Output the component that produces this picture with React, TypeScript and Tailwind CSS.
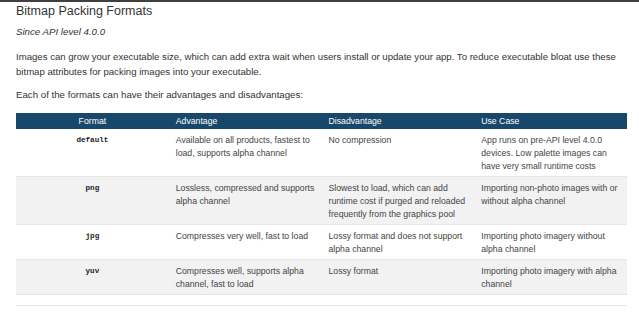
const rows = [
  {
    format: "default",
    advantage: "Available on all products, fastest to load, supports alpha channel",
    disadvantage: "No compression",
    useCase:
      "App runs on pre-API level 4.0.0 devices. Low palette images can have very small runtime costs",
  },
  {
    format: "png",
    advantage: "Lossless, compressed and supports alpha channel",
    disadvantage:
      "Slowest to load, which can add runtime cost if purged and reloaded frequently from the graphics pool",
    useCase: "Importing non-photo images with or without alpha channel",
  },
  {
    format: "jpg",
    advantage: "Compresses very well, fast to load",
    disadvantage: "Lossy format and does not support alpha channel",
    useCase: "Importing photo imagery without alpha channel",
  },
  {
    format: "yuv",
    advantage: "Compresses well, supports alpha channel, fast to load",
    disadvantage: "Lossy format",
    useCase: "Importing photo imagery with alpha channel",
  },
];

export default function App() {
  return (
    <div className="h-[318px] w-[639px] overflow-hidden border-t-2 border-[#3f3f3f] bg-white font-['Liberation_Sans',Arial,sans-serif] text-[#333]">
      <div className="px-4">
        <h2 className="pt-[1px] text-[12.5px] leading-[16px]">Bitmap Packing Formats</h2>
        <p className="mt-[5px] text-[9.7px] italic leading-[15px]">Since API level 4.0.0</p>
        <p className="mt-[10px] w-[614px] text-[9.6px] leading-[15px]">
          Images can grow your executable size, which can add extra wait when users install or
          update your app. To reduce executable bloat use these bitmap attributes for packing
          images into your executable.
        </p>
        <p className="mt-[8px] text-[9.7px] leading-[15px]">
          Each of the formats can have their advantages and disadvantages:
        </p>

        <table className="mt-[11px] w-[611px] table-fixed border-collapse text-[8.7px] leading-[13px] text-[#444]">
          <thead>
            <tr className="bg-[#17476a] text-white">
              <th className="w-1/4 px-[7px] py-[1.5px] text-center font-normal">Format</th>
              <th className="w-1/4 px-[7px] py-[1.5px] text-left font-normal">Advantage</th>
              <th className="w-1/4 px-[7px] py-[1.5px] text-left font-normal">Disadvantage</th>
              <th className="w-1/4 px-[7px] py-[1.5px] text-left font-normal">Use Case</th>
            </tr>
          </thead>
          <tbody>
            {rows.map((row, i) => (
              <tr
                key={row.format}
                className={`border-b border-[#e6e6e6] align-top ${i % 2 === 1 ? "bg-[#f2f2f2]" : "bg-white"}`}
              >
                <td className="px-[7px] pt-[5px] pb-[3px] text-center font-['Liberation_Mono',monospace] text-[7.6px] font-bold text-[#222]">
                  {row.format}
                </td>
                <td className="px-[7px] pt-[5px] pb-[3px]">{row.advantage}</td>
                <td className="px-[7px] pt-[5px] pb-[3px]">{row.disadvantage}</td>
                <td className="px-[7px] pt-[5px] pb-[3px]">{row.useCase}</td>
              </tr>
            ))}
          </tbody>
        </table>
        <div className="mt-[10px] h-px w-[611px] bg-[#e6e6e6]" />
      </div>
    </div>
  );
}
